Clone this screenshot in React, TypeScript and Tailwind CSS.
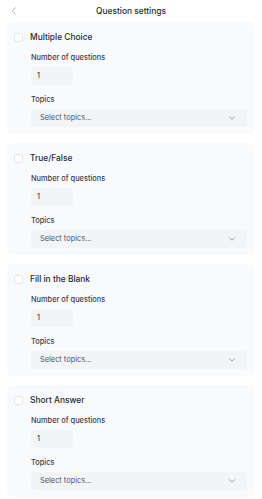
import { ChevronDown, ChevronLeft } from "lucide-react";

const sections = ["Multiple Choice", "True/False", "Fill in the Blank", "Short Answer"];

function SectionCard({ title }: { title: string }) {
  return (
    <div className="rounded-[6px] bg-[#f9fafb] pt-[10px] pb-[7px] pl-[7px] pr-[8px]">
      <div className="flex h-[10px] items-center gap-[7px]">
        <span className="h-[9px] w-[9px] shrink-0 rounded-[2px] border border-[#e5e7eb] bg-white" />
        <span className="text-[8.4px] font-medium leading-none text-[#1f2937]">{title}</span>
      </div>
      <div className="ml-[17px] flex flex-col">
        <label className="mt-[11px] h-[10px] text-[7.4px] font-medium leading-[10px] text-[#374151]">
          Number of questions
        </label>
        <div className="mt-[4px] flex h-[18px] w-[42px] items-center rounded-[3px] bg-[#f3f4f6] pl-[6px] text-[7.4px] text-[#1f2937]">
          1
        </div>
        <label className="mt-[10px] h-[10px] text-[7.4px] font-medium leading-[10px] text-[#374151]">
          Topics
        </label>
        <div className="mt-[4px] flex h-[18px] items-center justify-between rounded-[3px] bg-[#f3f4f6] pl-[9px] pr-[10px] text-[7.4px] text-[#4b5563]">
          <span>Select topics...</span>
          <ChevronDown size={10} strokeWidth={1.6} className="text-[#6b7280]" />
        </div>
      </div>
    </div>
  );
}

export default function App() {
  return (
    <div className="min-h-screen bg-white px-[7px] pb-[8px] font-['Inter',sans-serif]">
      <div className="grid h-[22px] grid-cols-[24px_1fr_24px] items-center">
        <ChevronLeft size={14} strokeWidth={1.3} className="text-[#9ca3af]" />
        <h1 className="text-center text-[8.4px] font-medium text-[#1f2937]">Question settings</h1>
        <span />
      </div>
      <div className="flex flex-col gap-[9px]">
        {sections.map((s) => (
          <SectionCard key={s} title={s} />
        ))}
      </div>
    </div>
  );
}
